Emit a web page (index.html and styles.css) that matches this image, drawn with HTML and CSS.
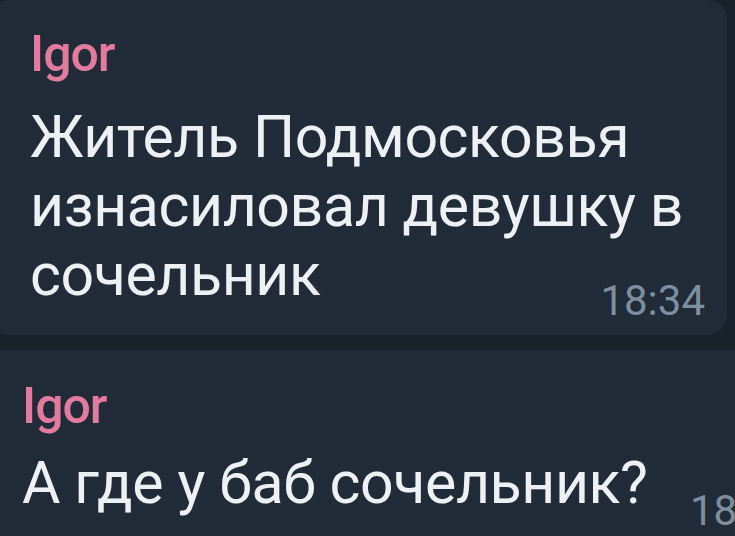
FILE: index.html
```html
<!DOCTYPE html>
<html lang="ru">
<head>
  <meta charset="UTF-8">
  <meta name="viewport" content="width=device-width, initial-scale=1.0">
  <title>Чат</title>
  <link rel="stylesheet" href="styles.css">
</head>
<body>
  <div class="chat">
    <div class="bubble first">
      <div class="author">Igor</div>
      <div class="text">Житель Подмосковья изнасиловал девушку в сочельник</div>
      <span class="time">18:34</span>
    </div>

    <div class="bubble second">
      <div class="author">Igor</div>
      <div class="text">А где у баб сочельник?</div>
      <span class="time">18:35</span>
    </div>
  </div>
</body>
</html>
```

FILE: styles.css
```css
/* Reset */
* {
  margin: 0;
  padding: 0;
  box-sizing: border-box;
}

body {
  font-family: 'Roboto', 'Noto Sans', sans-serif;
  background-color: #19212b;
  overflow: hidden;
  width: 735px;
  height: 536px;
}

.chat {
  display: flex;
  flex-direction: column;
  gap: 15px;
}

/* Bolla messaggio */
.bubble {
  position: relative;
  background-color: #222c38;
  border-radius: 20px;
}

.first {
  margin-left: -10px;
  width: 737px;
  padding: 26px 20px 26px 40px;
}

.second {
  margin-left: -16px;
  width: 800px;
  padding: 28px 40px 26px 38px;
}

.author {
  color: #e27b9e;
  font-size: 50px;
  font-weight: 500;
  line-height: 56px;
  letter-spacing: -1px;
}

.text {
  color: #eef1f4;
  font-size: 59px;
  line-height: 69px;
  letter-spacing: -0.4px;
  margin-top: 20px;
}

.second .text {
  margin-top: 14px;
}

.time {
  position: absolute;
  font-size: 42px;
  line-height: 42px;
  color: #7f8e9d;
}

.first .time {
  right: 22px;
  bottom: 13px;
}

.second .time {
  left: 706px;
  top: 140px;
}
```
